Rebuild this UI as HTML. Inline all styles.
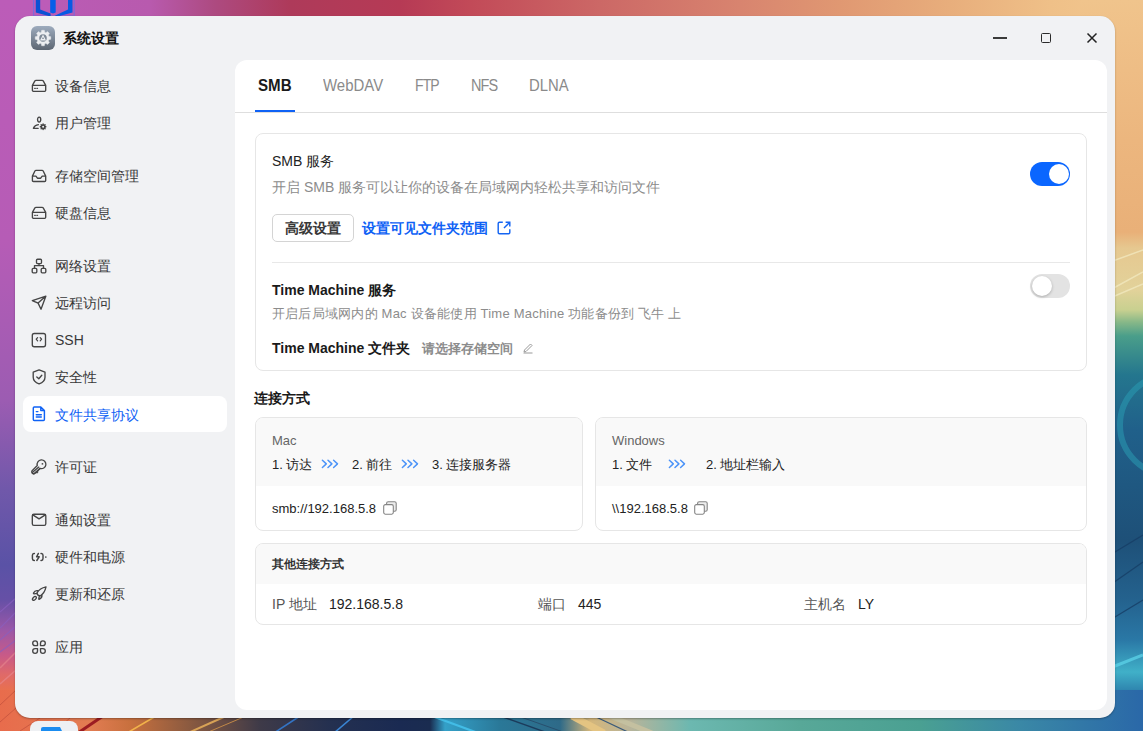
<!DOCTYPE html>
<html><head><meta charset="utf-8">
<style>
*{box-sizing:border-box;margin:0;padding:0}
html,body{width:1143px;height:731px;overflow:hidden}
body{position:relative;font-family:"Liberation Sans",sans-serif;color:#1f1f1f;background:#5a5aa8}
.abs{position:absolute}
svg{position:absolute;overflow:visible}
#wall{position:absolute;left:0;top:0;width:1143px;height:731px;overflow:hidden}
#win{position:absolute;left:15px;top:16px;width:1100px;height:702px;background:#f1f2f4;border-radius:15px;overflow:hidden;box-shadow:0 1px 2px rgba(0,0,0,.3)}
#panel{position:absolute;left:220px;top:44px;width:872px;height:650px;background:#fff;border-radius:12px;overflow:hidden}
.nav{position:absolute;left:8px;width:204px;height:36px;border-radius:8px;font-size:14px;color:#383838}
.nav svg{left:8px;top:10px;width:16px;height:16px}
.nav .t{position:absolute;left:32px;top:1px;line-height:36px;white-space:nowrap}
.nav.act{background:#fff;color:#0f62f5}
.tab{position:absolute;top:0;line-height:51px;font-size:16px;color:#8a8a8a;white-space:nowrap}
.card{position:absolute;border:1px solid #e6e6e6;border-radius:8px;overflow:hidden;background:#fff}
.txt{position:absolute;white-space:nowrap}
.gray{color:#8c8c8c}
.b{font-weight:bold}
</style></head><body>
<div id="wall">
  <div class="abs" style="left:0;top:0;width:1143px;height:60px;background:linear-gradient(to right,#bb5cb8 0px,#b85aae 150px,#ad4a80 215px,#ae3a5a 290px,#b63a55 400px,#c24a58 470px,#cc6866 600px,#d8846f 740px,#e09872 840px,#e8ae7c 950px,#efc088 1050px,#f2c990 1143px)"></div>
  <div class="abs" style="left:0;top:0;width:50px;height:731px;background:linear-gradient(to bottom,#bc5cb8 0,#b65cb6 240px,#9c5cb2 400px,#7058aa 490px,#5a52a6 565px,#6650a6 600px,#9a58a8 630px,#c85a88 655px,#e06a68 675px,#e8704f 690px,#e86a48 731px)"></div>
  <div class="abs" style="left:1080px;top:0;width:63px;height:731px;background:linear-gradient(to bottom,#f0c48c 0,#ecb67e 140px,#e9b078 232px,#e6c890 248px,#e2d29a 290px,#c8d090 310px,#88b888 322px,#4a9e8a 336px,#24768e 375px,#20608a 430px,#1e5078 540px,#24628e 600px,#2a78a6 640px,#40b0c8 672px,#2a7aa8 695px,#27609a 731px)"></div>
  <div class="abs" style="left:0;top:690px;width:1143px;height:41px;background:linear-gradient(to right,#e86c4c 0,#e27c52 90px,#c8703e 130px,#8a5a40 190px,#3e3a48 260px,#243050 330px,#1a2a52 400px,#1a2c50 430px,#34a0c8 445px,#2a7898 500px,#2e6a88 560px,#d4b67a 590px,#b8b49a 630px,#6cb8b0 690px,#58a898 800px,#4aa092 920px,#3a88a6 1020px,#2a68a8 1143px)"></div>
  <svg style="left:0;top:0;width:1143px;height:731px" viewBox="0 0 1143 731">
    <rect x="33.6" y="-2" width="40.6" height="18" fill="none" stroke="#6a6ee6" stroke-width="1.1" opacity=".75"/>
    <path d="M35.8 -2H40.2V9.6L50.6 13.6V16.5L35.8 12.4Z" fill="#0b52d4"/>
    <path d="M50.2 -2H55.7V12.4L53 13.6L50.2 12.4Z" fill="#075ee8"/>
    <path d="M68 -2H72.5V12.4L57.6 16.5H55.2L55.2 15.6L68 9.6Z" fill="#085ae4"/>
    <path d="M0 612L16 598M0 628L16 612M0 640L16 626M0 652L16 640" stroke="#8a60c0" stroke-width="1.2" opacity=".7"/>
    <path d="M0 668L16 652M0 684L16 670" stroke="#e88a90" stroke-width="1.5" opacity=".6"/>
    <path d="M0 705L16 690M0 722L16 708M20 731L40 718M55 731L70 718" stroke="#b84838" stroke-width="0.8" opacity=".7"/>
    <path d="M78 733L103 716" stroke="#9c1c22" stroke-width="3"/>
    <path d="M127 733L156 716" stroke="#f2b24a" stroke-width="1.6"/>
    <path d="M188 733L226 716" stroke="#d8a256" stroke-width="2"/>
    <path d="M206 733L246 716" stroke="#c08848" stroke-width="1"/>
    <path d="M274 733L300 716" stroke="#3474c4" stroke-width="1.6"/>
    <path d="M334 733L354 716" stroke="#3a84d2" stroke-width="1.6"/>
    <path d="M432 716L478 733" stroke="#42bce6" stroke-width="2.2"/>
    <path d="M500 716L548 733" stroke="#1c3c5c" stroke-width="1.4"/>
    <path d="M518 716L566 733" stroke="#28506e" stroke-width="1"/>
    <path d="M572 716L604 733" stroke="#e4c482" stroke-width="7"/>
    <path d="M594 716L630 733" stroke="#3a5a7a" stroke-width="1.2"/>
    <path d="M610 716L652 733" stroke="#c4c0a0" stroke-width="5"/>
    <circle cx="1170" cy="425" r="50" fill="none" stroke="#2a9ab2" stroke-width="6" opacity=".55"/>
    <path d="M1110 262L1143 250M1110 290L1143 272M1110 298L1143 284" stroke="#f4ecc4" stroke-width="1.5" opacity=".7"/>
    <path d="M1110 555L1143 535M1110 585L1143 562M1110 620L1143 600" stroke="#173e66" stroke-width="1.2" opacity=".8"/>
    <path d="M1110 668L1143 655" stroke="#5ad0e6" stroke-width="3" opacity=".8"/>
    <rect x="30" y="721" width="48" height="20" rx="8" fill="#eef0f3"/>
    <path d="M41 731V729a2 2 0 0 1 2-2h17l2 4z" fill="#1a8cf0"/>
  </svg>
</div>
<div id="win">
  <!-- title bar -->
  <div class="abs" style="left:16px;top:10px;width:24px;height:24px;border-radius:6px;background:linear-gradient(#9dabbd,#5d6773)"></div>
  <svg style="left:16px;top:10px;width:24px;height:24px" viewBox="0 0 24 24">
    <path d="M17.84 10.25 L19.78 10.65 L19.78 13.35 L17.84 13.75 L17.37 14.89 L18.46 16.55 L16.55 18.46 L14.89 17.37 L13.75 17.84 L13.35 19.78 L10.65 19.78 L10.25 17.84 L9.11 17.37 L7.45 18.46 L5.54 16.55 L6.63 14.89 L6.16 13.75 L4.22 13.35 L4.22 10.65 L6.16 10.25 L6.63 9.11 L5.54 7.45 L7.45 5.54 L9.11 6.63 L10.25 6.16 L10.65 4.22 L13.35 4.22 L13.75 6.16 L14.89 6.63 L16.55 5.54 L18.46 7.45 L17.37 9.11Z" fill="#eceef1" stroke="#eceef1" stroke-width="0.4" stroke-linejoin="round"/>
    <circle cx="12" cy="12" r="3.8" fill="#7f8a97"/>
    <path d="M12 8.4L15 14.6H9Z" fill="#eceef1"/>
    <rect x="11.25" y="11.6" width="1.5" height="1.4" fill="#7f8a97"/>
  </svg>
  <div class="abs" style="left:48px;top:12px;font-size:14px;font-weight:bold;line-height:20px;color:#111">系统设置</div>
  <!-- window controls -->
  <div class="abs" style="left:978px;top:21px;width:14px;height:1.6px;background:#3a3a3a"></div>
  <div class="abs" style="left:1026px;top:17px;width:10px;height:10px;border:1.9px solid #2a2a2a;border-radius:1.5px"></div>
  <svg style="left:1072px;top:17px;width:10px;height:10px" viewBox="0 0 10 10"><path d="M0.5 0.5L9.5 9.5M9.5 0.5L0.5 9.5" stroke="#222" stroke-width="1.5"/></svg>

  <!-- sidebar -->
  <div class="nav" style="top:51px"><svg viewBox="0 0 16 16" fill="none" stroke="#454545" stroke-width="1.35" stroke-linejoin="round" stroke-linecap="round"><path d="M1.4 8.4L3.9 3.9Q4.3 3.3 5 3.3H11.1Q11.8 3.3 12.2 3.9L14.7 8.4V13.2Q14.7 14.3 13.6 14.3H2.5Q1.4 14.3 1.4 13.2Z M1.4 8.4H14.7 M3.7 11.3H4.3 M5.9 11.3H6.5" /></svg><div class="t">设备信息</div></div>
  <div class="nav" style="top:88px"><svg viewBox="0 0 16 16" fill="none" stroke="#454545" stroke-width="1.35" stroke-linejoin="round" stroke-linecap="round"><ellipse cx="8.15" cy="5.6" rx="1.6" ry="2.45"/><path d="M7.4 10.7Q3.6 11.1 2.4 14.3H7.2"/><circle cx="12.1" cy="12.8" r="1.75" stroke-width="1.5"/><path d="M12.1 10.05V10.6M12.1 15V15.55M9.35 12.8H9.9M14.3 12.8H14.85M10.15 10.85L10.55 11.25M13.65 14.35L14.05 14.75M14.05 10.85L13.65 11.25M10.55 14.35L10.15 14.75" stroke-width="1.4"/></svg><div class="t">用户管理</div></div>
  <div class="nav" style="top:141px"><svg viewBox="0 0 16 16" fill="none" stroke="#454545" stroke-width="1.35" stroke-linejoin="round" stroke-linecap="round"><path d="M1.4 9.1L3.9 4Q4.3 3.3 5 3.3H11.1Q11.8 3.3 12.2 4L14.7 9.1V13.4Q14.7 14.5 13.6 14.5H2.5Q1.4 14.5 1.4 13.4Z M1.4 9.1H4.9L6.4 11.2H9.7L11.2 9.1H14.7"/></svg><div class="t">存储空间管理</div></div>
  <div class="nav" style="top:178px"><svg viewBox="0 0 16 16" fill="none" stroke="#454545" stroke-width="1.35" stroke-linejoin="round" stroke-linecap="round"><path d="M1.4 8.4L3.9 3.9Q4.3 3.3 5 3.3H11.1Q11.8 3.3 12.2 3.9L14.7 8.4V13.2Q14.7 14.3 13.6 14.3H2.5Q1.4 14.3 1.4 13.2Z M1.4 8.4H14.7 M3.7 11.3H4.3 M5.9 11.3H6.5" /></svg><div class="t">硬盘信息</div></div>
  <div class="nav" style="top:231px"><svg viewBox="0 0 16 16" fill="none" stroke="#454545" stroke-width="1.35" stroke-linejoin="round" stroke-linecap="round"><rect x="5.5" y="2.2" width="5" height="4.4" rx="1"/><rect x="1.2" y="11.4" width="4.6" height="4.4" rx="1"/><rect x="10.2" y="11.4" width="4.6" height="4.4" rx="1"/><path d="M8 6.6V8.6M3.5 11.4V8.6H12.5V11.4"/></svg><div class="t">网络设置</div></div>
  <div class="nav" style="top:268px"><svg viewBox="0 0 16 16" fill="none" stroke="#454545" stroke-width="1.35" stroke-linejoin="round" stroke-linecap="round"><path d="M1.3 6.6L14.9 2.1L10 15.2L7.1 9.1Z M7.1 9.1L14.9 2.1"/></svg><div class="t">远程访问</div></div>
  <div class="nav" style="top:305px"><svg viewBox="0 0 16 16" fill="none" stroke="#454545" stroke-width="1.35" stroke-linejoin="round" stroke-linecap="round"><rect x="1.3" y="2.5" width="13.2" height="13.2" rx="2"/><path d="M6.6 6.6L5.2 8.2L6.6 9.8M9.2 6.6L10.6 8.2L9.2 9.8" stroke-width="1.25"/></svg><div class="t">SSH</div></div>
  <div class="nav" style="top:342px"><svg viewBox="0 0 16 16" fill="none" stroke="#454545" stroke-width="1.35" stroke-linejoin="round" stroke-linecap="round"><path d="M8.1 1.9L14 4.2V9.2Q14 13.6 8.1 15.9Q2.2 13.6 2.2 9.2V4.2Z M5.8 9L7.8 10.8L10.8 7.3"/></svg><div class="t">安全性</div></div>
  <div class="nav act" style="top:380px"><svg viewBox="0 0 16 16" fill="none" stroke="#454545" stroke-width="1.35" stroke-linejoin="round" stroke-linecap="round"><path d="M3.3 0.9H9.8L13.4 4.5V13.4Q13.4 14.4 12.4 14.4H3.3Q2.3 14.4 2.3 13.4V1.9Q2.3 0.9 3.3 0.9Z M9.8 0.9V4.5H13.4 M5.3 5.6H6.9 M5.3 8.7H10.3 M5.3 11H10.3" stroke="#0f62f5" stroke-width="1.45"/></svg><div class="t">文件共享协议</div></div>
  <div class="nav" style="top:432px"><svg viewBox="0 0 16 16" fill="none" stroke="#454545" stroke-width="1.35" stroke-linejoin="round" stroke-linecap="round"><path d="M9.056 10.456A4.4 4.4 0 1 0 6.287 7.569L1.316 12.456A2 2 0 0 0 4.084 15.344L5.367 14.082L5.99 14.73L6.846 13.89L6.223 13.24Z" stroke-width="1.3"/><rect x="10.7" y="5.1" width="1.5" height="1.5" fill="#454545" stroke="none"/><path d="M7.8 9.1L1.6 14.3Q1.4 15.6 2.7 15.9L8.9 10.4"/></svg><div class="t">许可证</div></div>
  <div class="nav" style="top:485px"><svg viewBox="0 0 16 16" fill="none" stroke="#454545" stroke-width="1.35" stroke-linejoin="round" stroke-linecap="round"><rect x="1.3" y="3.2" width="13.5" height="11.2" rx="1.6"/><path d="M1.8 3.9L8.05 7.9L14.3 3.9"/></svg><div class="t">通知设置</div></div>
  <div class="nav" style="top:522px"><svg viewBox="0 0 16 16" fill="none" stroke="#454545" stroke-width="1.35" stroke-linejoin="round" stroke-linecap="round"><path d="M3.4 5.5H3Q1.4 5.5 1.4 7.3V10.6Q1.4 12.4 3 12.4H3.4 M10 5.5H10.4Q12 5.5 12 7.3V10.6Q12 12.4 10.4 12.4H10 M7.4 5.4L5.6 8.8H8.2L5.8 12.5" stroke-width="1.45"/><circle cx="14.8" cy="9" r="0.85" fill="#454545" stroke="none"/></svg><div class="t">硬件和电源</div></div>
  <div class="nav" style="top:559px"><svg viewBox="0 0 16 16" fill="none" stroke="#454545" stroke-width="1.35" stroke-linejoin="round" stroke-linecap="round"><path d="M15 1.9Q8.8 3.2 6 7.8Q6 10.6 9.2 11Q13.7 8.1 15 1.9Z M6.6 5.7Q3.8 5.3 2.5 8Q2.3 8.9 3.1 8.8L5.8 8.3 M10.9 9.9Q11.4 12.7 8.5 14.2Q7.6 14.6 7.8 13.7L8.3 11.3"/><ellipse cx="3.4" cy="13.4" rx="2.3" ry="1.4" transform="rotate(-45 3.4 13.4)"/></svg><div class="t">更新和还原</div></div>
  <div class="nav" style="top:612px"><svg viewBox="0 0 16 16" fill="none" stroke="#454545" stroke-width="1.35" stroke-linejoin="round" stroke-linecap="round"><path d="M1.7 5.2Q1.7 2.9 4.1 2.9Q6.5 2.9 6.5 5.2V7.6H4.1Q1.7 7.6 1.7 5.2Z M14.3 5.2Q14.3 2.9 11.9 2.9Q9.5 2.9 9.5 5.2V7.6H11.9Q14.3 7.6 14.3 5.2Z M1.7 13Q1.7 15.3 4.1 15.3Q6.5 15.3 6.5 13V10.6H4.1Q1.7 10.6 1.7 13Z M14.3 13Q14.3 15.3 11.9 15.3Q9.5 15.3 9.5 13V10.6H11.9Q14.3 10.6 14.3 13Z"/></svg><div class="t">应用</div></div>

  <div id="panel">
    <!-- tabs -->
    <div class="tab b" style="left:23px;color:#1a1a1a;transform:scaleX(.944);transform-origin:0 0">SMB</div>
    <div class="tab" style="left:88px;transform:scaleX(.935);transform-origin:0 0">WebDAV</div>
    <div class="tab" style="left:180px;letter-spacing:-1px;transform:scaleX(.874);transform-origin:0 0">FTP</div>
    <div class="tab" style="left:236px;letter-spacing:-1px;transform:scaleX(.905);transform-origin:0 0">NFS</div>
    <div class="tab" style="left:294px;transform:scaleX(.93);transform-origin:0 0">DLNA</div>
    <div class="abs" style="left:0;top:52px;width:872px;height:1px;background:#dedede"></div>
    <div class="abs" style="left:20px;top:50px;width:40px;height:2px;background:#0f62f5"></div>

    <!-- SMB card -->
    <div class="card" style="left:20px;top:73px;width:832px;height:238px">
      <div class="txt" style="left:16px;top:17px;font-size:14px;line-height:20px;color:#222">SMB 服务</div>
      <div class="txt gray" style="left:16px;top:43px;font-size:14px;line-height:20px">开启 SMB 服务可以让你的设备在局域网内轻松共享和访问文件</div>
      <div class="abs" style="left:16px;top:80px;width:82px;height:28px;border:1px solid #d4d4d4;border-radius:5px;font-size:14px;line-height:26px;text-align:center;color:#383838;font-weight:bold">高级设置</div>
      <div class="txt b" style="left:106px;top:84px;font-size:14px;line-height:20px;color:#0f62f5">设置可见文件夹范围</div>
      <svg style="left:241px;top:87px;width:14px;height:14px" viewBox="0 0 14 14"><path d="M5.8 1.2H2.4Q1.2 1.2 1.2 2.4V11.6Q1.2 12.8 2.4 12.8H11.6Q12.8 12.8 12.8 11.6V8.2 M8.6 1.2H12.8V5.4 M12.8 1.2L7 7" fill="none" stroke="#1565f2" stroke-width="1.45"/></svg>
      <div class="abs" style="left:16px;top:128px;width:798px;height:1px;background:#e8e8e8"></div>
      <div class="abs" style="left:774px;top:28px;width:40px;height:24px;border-radius:12px;background:#0a66ff"></div>
      <div class="abs" style="left:793px;top:30px;width:20px;height:20px;border-radius:10px;background:#fff"></div>
      <div class="txt b" style="left:16px;top:146px;font-size:14px;line-height:20px;color:#1a1a1a">Time Machine 服务</div>
      <div class="txt gray" style="left:16px;top:171px;font-size:13px;line-height:18px;letter-spacing:0.22px">开启后局域网内的 Mac 设备能使用 Time Machine 功能备份到 飞牛 上</div>
      <div class="abs" style="left:774px;top:140px;width:40px;height:24px;border-radius:12px;background:#e3e3e3"></div>
      <div class="abs" style="left:776px;top:142px;width:20px;height:20px;border-radius:10px;background:#fff;box-shadow:0 1px 3px rgba(0,0,0,.25)"></div>
      <div class="txt b" style="left:16px;top:204px;font-size:14px;line-height:20px;color:#1a1a1a">Time Machine 文件夹</div>
      <div class="txt gray" style="left:166px;top:206px;font-size:13px;line-height:18px;font-weight:600">请选择存储空间</div>
      <svg style="left:266px;top:208px;width:12px;height:12px" viewBox="0 0 12 12"><path d="M2 10L2.5 8L8.5 2L10 3.5L4 9.5Z M1.5 11H10.5" fill="none" stroke="#999" stroke-width="1"/></svg>
    </div>

    <div class="txt b" style="left:19px;top:328px;font-size:14px;line-height:20px;color:#1a1a1a">连接方式</div>

    <!-- Mac card -->
    <div class="card" style="left:20px;top:357px;width:328px;height:114px">
      <div class="abs" style="left:0;top:0;width:328px;height:68px;background:#f9f9f9"></div>
      <div class="txt" style="left:16px;top:14px;font-size:13px;line-height:18px;color:#666">Mac</div>
      <div class="txt" style="left:16px;top:38px;font-size:13px;line-height:18px;color:#222">1. 访达</div>
      <svg style="left:65px;top:41px;width:18px;height:10px" viewBox="0 0 18 10"><path d="M1.4 1.2L5.3 4.85L1.4 8.5M7 1.2L10.9 4.85L7 8.5M12.6 1.2L16.5 4.85L12.6 8.5" fill="none" stroke="#4d94f8" stroke-width="1.5" stroke-linecap="round" stroke-linejoin="round"/></svg>
      <div class="txt" style="left:96px;top:38px;font-size:13px;line-height:18px;color:#222">2. 前往</div>
      <svg style="left:145px;top:41px;width:18px;height:10px" viewBox="0 0 18 10"><path d="M1.4 1.2L5.3 4.85L1.4 8.5M7 1.2L10.9 4.85L7 8.5M12.6 1.2L16.5 4.85L12.6 8.5" fill="none" stroke="#4d94f8" stroke-width="1.5" stroke-linecap="round" stroke-linejoin="round"/></svg>
      <div class="txt" style="left:176px;top:38px;font-size:13px;line-height:18px;color:#222">3. 连接服务器</div>
      <div class="txt" style="left:16px;top:82px;font-size:13px;line-height:18px;color:#222">smb://192.168.5.8</div>
      <svg style="left:126px;top:82px;width:16px;height:16px" viewBox="0 0 16 16"><rect x="4.6" y="1.7" width="9.6" height="9.6" rx="1.6" fill="#ececec" stroke="#858585" stroke-width="1.1"/><rect x="1.7" y="4.6" width="9.6" height="9.6" rx="1.6" fill="#fff" stroke="#858585" stroke-width="1.1"/></svg>
    </div>
    <!-- Windows card -->
    <div class="card" style="left:360px;top:357px;width:492px;height:114px">
      <div class="abs" style="left:0;top:0;width:492px;height:68px;background:#f9f9f9"></div>
      <div class="txt" style="left:16px;top:14px;font-size:13px;line-height:18px;color:#666">Windows</div>
      <div class="txt" style="left:16px;top:38px;font-size:13px;line-height:18px;color:#222">1. 文件</div>
      <svg style="left:72px;top:41px;width:18px;height:10px" viewBox="0 0 18 10"><path d="M1.4 1.2L5.3 4.85L1.4 8.5M7 1.2L10.9 4.85L7 8.5M12.6 1.2L16.5 4.85L12.6 8.5" fill="none" stroke="#4d94f8" stroke-width="1.5" stroke-linecap="round" stroke-linejoin="round"/></svg>
      <div class="txt" style="left:110px;top:38px;font-size:13px;line-height:18px;color:#222">2. 地址栏输入</div>
      <div class="txt" style="left:16px;top:82px;font-size:13px;line-height:18px;color:#222">\\192.168.5.8</div>
      <svg style="left:97px;top:82px;width:16px;height:16px" viewBox="0 0 16 16"><rect x="4.6" y="1.7" width="9.6" height="9.6" rx="1.6" fill="#ececec" stroke="#858585" stroke-width="1.1"/><rect x="1.7" y="4.6" width="9.6" height="9.6" rx="1.6" fill="#fff" stroke="#858585" stroke-width="1.1"/></svg>
    </div>
    <!-- Other card -->
    <div class="card" style="left:20px;top:483px;width:832px;height:82px">
      <div class="abs" style="left:0;top:0;width:832px;height:40px;background:#f9f9f9"></div>
      <div class="txt b" style="left:16px;top:12px;font-size:12px;line-height:17px;color:#333">其他连接方式</div>
      <div class="txt" style="left:16px;top:50px;font-size:14px;line-height:20px;color:#555">IP 地址</div>
      <div class="txt" style="left:73px;top:50px;font-size:14px;line-height:20px;color:#222">192.168.5.8</div>
      <div class="txt" style="left:282px;top:50px;font-size:14px;line-height:20px;color:#555">端口</div>
      <div class="txt" style="left:322px;top:50px;font-size:14px;line-height:20px;color:#222">445</div>
      <div class="txt" style="left:548px;top:50px;font-size:14px;line-height:20px;color:#555">主机名</div>
      <div class="txt" style="left:602px;top:50px;font-size:14px;line-height:20px;color:#222">LY</div>
    </div>
  </div>
</div>
</body></html>
